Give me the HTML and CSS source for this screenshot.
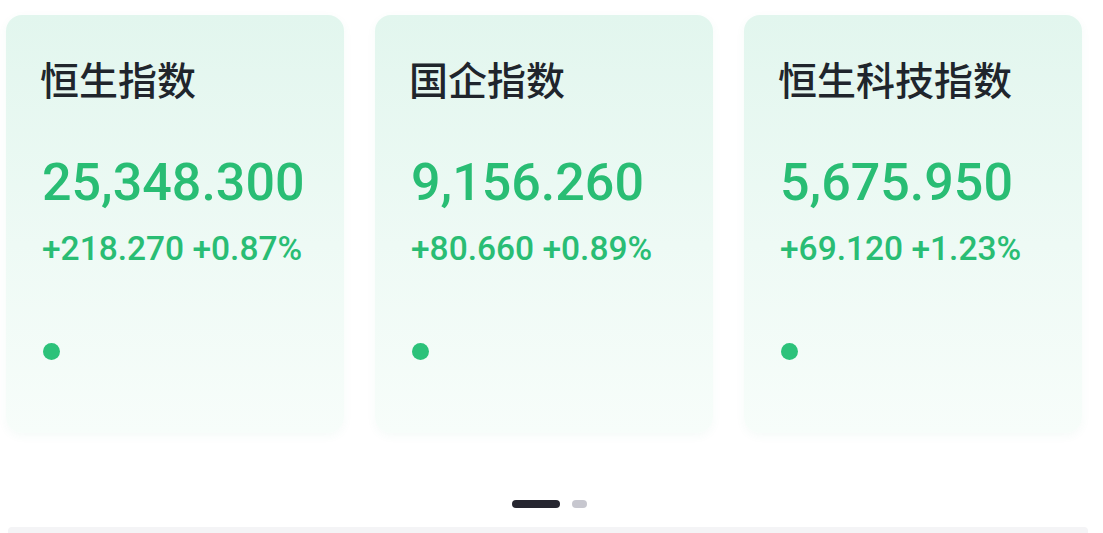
FILE: index.html
```html
<!DOCTYPE html>
<html lang="zh-CN">
<head>
<meta charset="utf-8">
<title>指数</title>
<link rel="stylesheet" href="styles.css">
</head>
<body>
<div class="page">
  <div class="cards">
    <div class="card">
      <div class="title">恒生指数</div>
      <div class="price">25,348.300</div>
      <div class="change">+218.270 +0.87%</div>
      <div class="dot"></div>
    </div>
    <div class="card">
      <div class="title">国企指数</div>
      <div class="price">9,156.260</div>
      <div class="change">+80.660 +0.89%</div>
      <div class="dot"></div>
    </div>
    <div class="card">
      <div class="title">恒生科技指数</div>
      <div class="price">5,675.950</div>
      <div class="change">+69.120 +1.23%</div>
      <div class="dot"></div>
    </div>
  </div>
  <div class="pager">
    <span class="pill active"></span>
    <span class="pill"></span>
  </div>
  <div class="band"></div>
</div>
</body>
</html>
```
FILE: styles.css
```css
html, body {
  margin: 0;
  padding: 0;
  background: #ffffff;
}
.page {
  width: 1103px;
  height: 533px;
  overflow: hidden;
  display: flex;
  flex-direction: column;
}
.cards {
  display: flex;
  gap: 31px;
  padding: 15px 0 0 6px;
}
.card {
  width: 338px;
  height: 418px;
  box-sizing: border-box;
  padding: 39px 0 0 36px;
  border-radius: 16px;
  background: linear-gradient(180deg, #e2f6ee 0%, #eefaf5 55%, #f7fdfa 100%);
  box-shadow: 0 3px 10px rgba(60, 160, 120, 0.05);
}
.title {
  margin-left: -2px;
  font-family: "Noto Sans CJK SC", "Noto Sans", sans-serif;
  font-weight: 500;
  font-size: 39px;
  line-height: 48px;
  color: #20252c;
}
.price {
  margin-top: 51px;
  font-family: Roboto, "Noto Sans", sans-serif;
  font-weight: 500;
  font-size: 52px;
  line-height: 60px;
  color: #29bd74;
}
.change {
  margin-top: 16px;
  font-family: Roboto, "Noto Sans", sans-serif;
  font-weight: 500;
  font-size: 33.5px;
  line-height: 40px;
  color: #29bd74;
}
.dot {
  margin-top: 74px;
  margin-left: 1px;
  width: 17px;
  height: 17px;
  border-radius: 50%;
  background: #2cc27a;
}
.pager {
  display: flex;
  justify-content: center;
  gap: 12px;
  margin-top: 67px;
  height: 8px;
  transform: translateX(-2px);
}
.pill {
  width: 15px;
  height: 8px;
  border-radius: 4px;
  background: #c7c7cf;
}
.pill.active {
  width: 48px;
  background: #262630;
}
.band {
  margin: 19px 15px 0 8px;
  height: 10px;
  border-radius: 4px 4px 0 0;
  background: #f4f4f6;
}
```
